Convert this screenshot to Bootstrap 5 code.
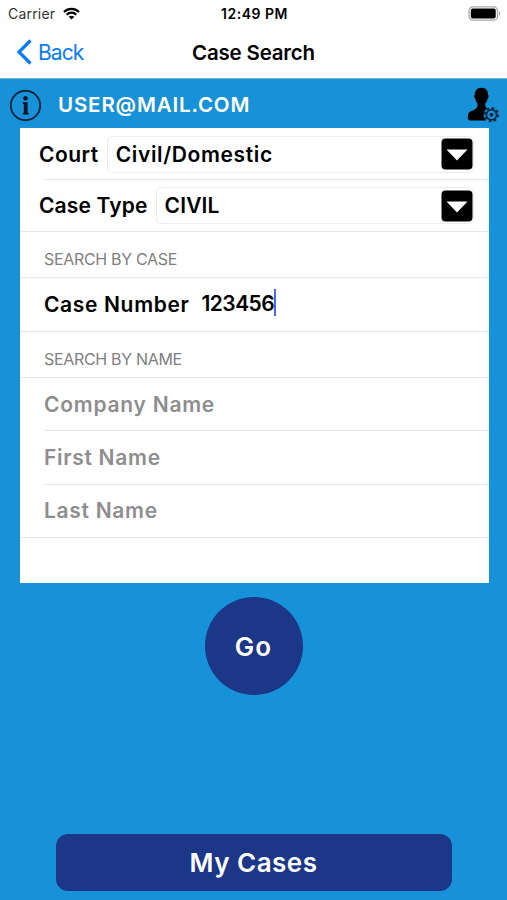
<!DOCTYPE html>
<html lang="en">
<head>
  <meta charset="UTF-8" />
  <meta name="viewport" content="width=device-width, initial-scale=1.0">
  <title>Case Search</title>
  <link href="https://cdn.jsdelivr.net/npm/bootstrap@5.3.2/dist/css/bootstrap.min.css" rel="stylesheet">
  <style>
    body {
      font-family: Inter, "Liberation Sans", sans-serif;
      background-color: #1791d8;
      color: #000;
      height: 900px;
      overflow: hidden;
      line-height: 1;
    }
    .status-bar {
      height: 27px;
      font-size: 14px;
      padding: 0 6px 0 8px;
    }
    .status-bar > div { flex: 1 1 0; }
    .carrier { color: #333; letter-spacing: 0.2px; }
    .clock { font-weight: 600; letter-spacing: 0.5px; white-space: nowrap; }
    .title-bar {
      height: 52px;
      padding: 1px 16px 0;
      border-bottom: 1px solid #7fb4da;
    }
    .title-bar > div { flex: 1 1 0; }
    .back-link { color: #0a7cf5; font-size: 21px; letter-spacing: -0.9px; gap: 6px; }
    .title-bar h1 { font-size: 20.5px; font-weight: 600; letter-spacing: -0.2px; white-space: nowrap; }
    .account-bar { height: 49px; padding: 3px 7px 0 9px; }
    .account-name {
      color: #fff;
      font-size: 20.5px;
      font-weight: 600;
      letter-spacing: 0.85px;
      margin-left: 16px;
    }
    .search-card {
      margin: 0 18px 0 20px;
      height: 455px;
      font-size: 21px;
      font-weight: 600;
    }
    .line-full { border-bottom: 1px solid #e6e6e6; }
    .line-inset { position: relative; }
    .line-inset::after {
      content: "";
      position: absolute;
      left: 24px;
      right: 0;
      bottom: 0;
      height: 1px;
      background: #e6e6e6;
    }
    .pick-row { height: 52px; padding: 0 15px 0 19px; }
    .picker {
      height: 37px;
      border: 1px solid #ededed;
      border-radius: 5px;
      padding: 0 0 0 8px;
    }
    .group-title {
      height: 46px;
      padding: 9px 0 0 24px;
      font-size: 16px;
      font-weight: 400;
      letter-spacing: -0.32px;
      color: #808080;
    }
    .field-row { height: 53.5px; padding-left: 24px; }
    .hint { color: #8e8e8e; }
    .case-value { margin: -2px 0 0 12px; letter-spacing: -0.55px; }
    .caret { width: 2px; height: 27px; margin-top: -3px; background: #4468ee; }
    .go-btn {
      width: 98px;
      height: 98px;
      margin-top: 14px;
      background: #1c3688;
      color: #fff;
      font-size: 26px;
      font-weight: 600;
      letter-spacing: 1px;
    }
    .cases-btn {
      width: 396px;
      height: 57px;
      margin: auto 0 9px;
      border-radius: 12px;
      background: #1c3688;
      color: #fff;
      font-size: 26px;
      font-weight: 600;
      letter-spacing: 0.5px;
    }
    .go-btn:hover, .cases-btn:hover { background: #16306f; color: #fff; }
    /* label tracking */
    .t-court { letter-spacing: 0.5px; }
    .t-value { letter-spacing: 0.63px; }
    .t-type { letter-spacing: 0.15px; }
    .t-case { letter-spacing: 0.65px; }
    .t-company { letter-spacing: 0.75px; }
    .t-name { letter-spacing: 0.7px; }
  </style>
</head>
<body class="d-flex flex-column">
  <div class="status-bar bg-white d-flex align-items-center">
    <div class="d-flex align-items-center gap-2">
      <span class="carrier">Carrier</span>
      <svg width="17" height="13" viewBox="0 0 17 13" fill="none" stroke="#000" stroke-width="2.2">
        <path d="M1 5C5.2.8 11.8.8 16 5M3.7 7.7c2.7-2.7 6.9-2.7 9.6 0"/>
        <path d="M8.5 12.6 5.7 9.8c1.6-1.5 4-1.5 5.6 0z" fill="#000" stroke="none"/>
      </svg>
    </div>
    <span class="clock">12:49 PM</span>
    <div class="d-flex justify-content-end">
      <svg width="33" height="15" viewBox="0 0 33 15">
        <rect x="1" y=".8" width="28.5" height="13.4" rx="4" fill="#fff" stroke="#aaa" stroke-width="1.3"/>
        <rect x="2.8" y="2.6" width="24.9" height="9.8" rx="2" fill="#000"/>
        <path d="M31 5.2c1.6.8 1.6 3.8 0 4.6z" fill="#999"/>
      </svg>
    </div>
  </div>

  <div class="title-bar bg-white d-flex align-items-center">
    <div>
      <a href="#" class="back-link d-inline-flex align-items-center text-decoration-none">
        <svg width="16" height="26" viewBox="0 0 16 26" fill="none" stroke="currentColor" stroke-width="3.2">
          <path d="M14.5 1.5 3 13l11.500 11.500"/>
        </svg>
        <span>Back</span>
      </a>
    </div>
    <h1 class="mb-0"><span>Case Search</span></h1>
    <div></div>
  </div>

  <div class="account-bar d-flex align-items-center">
    <svg width="33" height="33" viewBox="0 0 33 33">
      <circle cx="16.5" cy="16.500" r="14.700" fill="none" stroke="#06263d" stroke-width="1.900"/>
      <circle cx="16.500" cy="9.200" r="2.200" fill="#031522"/>
      <path d="M13.700 13.200h4.900v10.500l1.100.4v1.300h-5.900v-1.300l1-.4v-8.700l-1.100-.5z" fill="#031522"/>
    </svg>
    <span class="account-name">USER@MAIL.COM</span>
    <svg class="ms-auto" width="33" height="36" viewBox="0 0 33 36">
      <path d="M14.500 .8c4.400 0 6.700 2.800 6.500 7 .9.400.7 3.200-.5 4-.4 2.300-1.200 3.900-2.400 5 .1 3.200 1.500 4.900 4.600 6.300L19 33.500H3.500Q.8 33.300.8 30.500c.2-4.300 1.300-5.800 4.800-7 3.600-1.300 5.100-2.900 5.100-6.700-1.200-1.100-2-2.700-2.400-5-1.200-.8-1.400-3.600-.5-4C7.700 3.600 10.100.8 14.500.8z"/>
      <circle cx="24.500" cy="27.700" r="7.800" fill="#1791d8"/>
      <circle cx="24.500" cy="27.700" r="6.600" fill="none" stroke="#06263d" stroke-width="2" stroke-dasharray="2.590 2.590"/>
      <circle cx="24.500" cy="27.700" r="5.100" fill="none" stroke="#06263d" stroke-width="1.700"/>
      <circle cx="24.500" cy="27.700" r="2" fill="#06263d"/>
    </svg>
  </div>

  <div class="search-card bg-white">
    <div class="pick-row line-inset d-flex align-items-center">
      <span class="t-court">Court</span>
      <div class="picker d-flex align-items-center flex-grow-1 ms-2">
        <span class="t-value">Civil/Domestic</span>
        <svg class="ms-auto" width="32" height="32" viewBox="0 0 32 32">
          <rect x=".5" y=".5" width="31" height="31" rx="4"/>
          <path d="M5.500 11.500h21L16 22.500z" fill="#fff"/>
        </svg>
      </div>
    </div>
    <div class="pick-row line-full d-flex align-items-center">
      <span class="t-type">Case Type</span>
      <div class="picker d-flex align-items-center flex-grow-1 ms-2">
        <span class="t-type">CIVIL</span>
        <svg class="ms-auto" width="32" height="32" viewBox="0 0 32 32">
          <rect x=".5" y=".5" width="31" height="31" rx="4"/>
          <path d="M5.500 11.500h21L16 22.500z" fill="#fff"/>
        </svg>
      </div>
    </div>

    <div class="group-title line-full d-flex align-items-center"><span>SEARCH BY CASE</span></div>
    <div class="field-row line-full d-flex align-items-center">
      <span class="t-case">Case Number</span>
      <span class="case-value">123456</span>
      <span class="caret"></span>
    </div>

    <div class="group-title line-full d-flex align-items-center"><span>SEARCH BY NAME</span></div>
    <div class="field-row line-inset hint d-flex align-items-center"><span class="t-company">Company Name</span></div>
    <div class="field-row line-inset hint d-flex align-items-center"><span class="t-name">First Name</span></div>
    <div class="field-row line-full hint d-flex align-items-center"><span class="t-name">Last Name</span></div>
  </div>

  <button type="button" class="go-btn btn rounded-circle border-0 p-0 align-self-center"><span>Go</span></button>
  <button type="button" class="cases-btn btn border-0 p-0 align-self-center"><span>My Cases</span></button>

  <script src="https://cdn.jsdelivr.net/npm/bootstrap@5.3.2/dist/js/bootstrap.bundle.min.js"></script>
</body>
</html>
